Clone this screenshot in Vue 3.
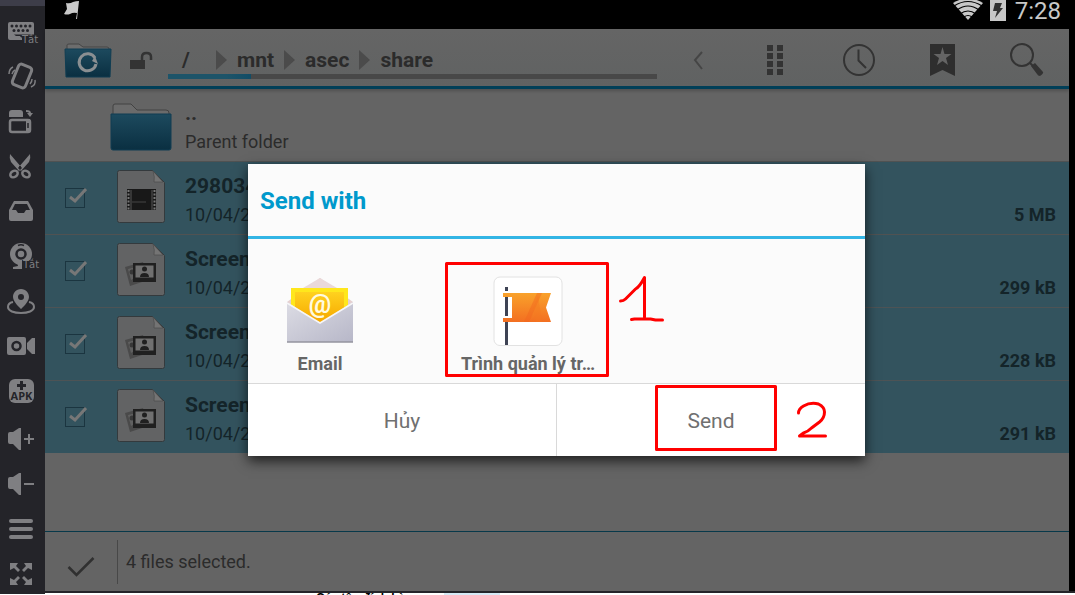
<script setup>
import { ref } from 'vue'

const tools = [
  { label: 'Keyboard off', art: '<rect x="8" y="22" width="26" height="18" rx="2"/><g fill="#242429"><circle cx="12" cy="26" r="1.5"/><circle cx="16.500" cy="26" r="1.500"/><circle cx="21" cy="26" r="1.500"/><circle cx="25.500" cy="26" r="1.500"/><circle cx="30" cy="26" r="1.500"/><circle cx="14" cy="30.500" r="1.500"/><circle cx="18.500" cy="30.500" r="1.500"/><circle cx="23" cy="30.500" r="1.500"/><circle cx="27.500" cy="30.500" r="1.500"/><path d="M14 34.500h20v6H22v-3h-4z"/></g><path d="M29 32h5v2h-5zM14 36h6l2 3h-8z"/><text x="22" y="43" font-size="10" font-family="DejaVu Sans, sans-serif">Tắt</text>' },
  { label: 'Shake', art: '<g fill="none" stroke="#7f7f82"><rect x="15" y="65" width="14" height="22" rx="3" stroke-width="3" transform="rotate(22 22 76)"/><path d="M13 67q-4 2-4 7M15 70q-2 1-3 4M35 80q1 5-4 7M32 79q0 3-2 5" stroke-width="1.5"/></g>' },
  { label: 'Rotate screen', art: '<path d="M12 110h8q3 0 3 3v4H9v-4q0-3 3-3z"/><rect x="10" y="120" width="20" height="12" rx="2" fill="none" stroke="#7f7f82" stroke-width="2.5"/><path d="M26 119h4v13h-4zM26 110q5 0 5 3h2l-3 4-3-4h2q0-1-3-1z"/><path d="M28 123v5" stroke="#242429" stroke-width="1.5"/>' },
  { label: 'Cut', art: '<path d="M10 154l12 14-3 3-8-9q-2-4-1-8zM30 154l-12 14 3 3 8-9q2-4 1-8z"/><g fill="none" stroke="#7f7f82" stroke-width="2.5"><ellipse cx="14" cy="174" rx="4" ry="3" transform="rotate(-35 14 174)"/><ellipse cx="26" cy="174" rx="4" ry="3" transform="rotate(35 26 174)"/></g><circle cx="20" cy="167" r="1" fill="#242429"/>' },
  { label: 'Shared folder', art: '<path d="M14 201h14l5 9v9q0 2-2 2H11q-2 0-2-2v-9z"/><path d="M15 204h12l3 6h-4l-2 3h-6l-2-3h-4z" fill="#242429"/>' },
  { label: 'Webcam off', art: '<circle cx="21" cy="254" r="11"/><path d="M17 262l1 4-5 1v2h13v-7z"/><circle cx="21" cy="254" r="4.500" fill="none" stroke="#242429" stroke-width="2.500"/><path d="M18 245.500q3-1.500 6 0" stroke="#242429" stroke-width="1.500" fill="none"/><path d="M22 260h17v9H22z" fill="#242429"/><text x="23" y="268" font-size="10" font-family="DejaVu Sans, sans-serif">Tắt</text>' },
  { label: 'Location', art: '<path d="M13 302q-5 1-5 5c0 4 6 6 13 6s13-2 13-6q0-4-5-5" fill="none" stroke="#7f7f82" stroke-width="2"/><path fill-rule="evenodd" d="M21 289c-5 0-8 4-8 8 0 5 8 12 8 12s8-7 8-12c0-4-3-8-8-8zm0 5a3 3 0 1 1 0 6 3 3 0 0 1 0-6z"/>' },
  { label: 'Record video', art: '<rect x="7" y="337" width="19" height="18" rx="2"/><circle cx="16.500" cy="346" r="4" fill="none" stroke="#242429" stroke-width="2.500"/><path d="M27 343l5-5h3v16h-3l-5-5z"/>' },
  { label: 'Install APK', art: '<rect x="9" y="379" width="25" height="24" rx="6"/><g fill="#242429"><path d="M20 381h3v3h3v3h-3v3h-3v-3h-3v-3h3z"/><text x="21.500" y="400" text-anchor="middle" font-size="11" font-weight="700" font-family="Open Sans, sans-serif">APK</text></g>' },
  { label: 'Volume up', art: '<path d="M8 434q0-2 2-2h3l6-4h2v22h-2l-6-6h-3q-2 0-2-2zM28 434h2v4h4v2h-4v4h-2v-4h-4v-2h4z"/>' },
  { label: 'Volume down', art: '<path d="M8 479q0-2 2-2h3l6-4h2v22h-2l-6-6h-3q-2 0-2-2zM24 483h10v2H24z"/>' },
  { label: 'Menu', art: '<rect x="9" y="519" width="24" height="4" rx="2"/><rect x="9" y="527" width="24" height="4" rx="2"/><rect x="9" y="535" width="24" height="4" rx="2"/>' },
  { label: 'Full screen', art: '<path d="M10 563h8l-2 3 4 4-2 2-4-4-4 2zM32 563h-8l2 3-4 4 2 2 4-4 4 2zM10 585h8l-2-3 4-4-2-2-4 4-4-2zM32 585h-8l2-3-4-4 2-2 4 4 4-2z"/>' },
]

const files = ref([
  { name: '298034', date: '10/04/20', size: '5 MB', kind: 'video', checked: true },
  { name: 'Screenshot', date: '10/04/20', size: '299 kB', kind: 'image', checked: true },
  { name: 'Screenshot', date: '10/04/20', size: '228 kB', kind: 'image', checked: true },
  { name: 'Screenshot', date: '10/04/20', size: '291 kB', kind: 'image', checked: true },
])

const crumbs = ['mnt', 'asec', 'share']
</script>

<template>
  <div class="shell">
    <aside class="sidebar">
      <button
        v-for="(tool, i) in tools"
        :key="tool.label"
        type="button"
        class="tool"
        :aria-label="tool.label"
      >
        <svg width="45" height="45" :viewBox="`0 ${9 + i * 45} 45 45`" fill="#7f7f82" v-html="tool.art"></svg>
      </button>
    </aside>

    <div class="device">
      <div class="status">
        <svg class="flag" width="18" height="20" viewBox="63 0 18 20">
          <path d="M66 3q4 1 7-1 3-1 6-1l-2 18h-1l1-6q-4-1-7 1-3 1-6 0l3-5z" fill="#c8c8c8" />
        </svg>
        <div class="status-right">
          <svg width="30" height="22" viewBox="953 0 30 22">
            <path d="M968 20l-15-17q15-9 30 0z" fill="#c8c8c8" />
            <path d="M954 6q14-9 28 0M957 10q11-8 22 0M960 14q8-6 16 0M964 17q4-3 8 0" fill="none" stroke="#000" stroke-width="1.2" />
          </svg>
          <svg width="16" height="22" viewBox="990 0 16 22">
            <path d="M990 0h16v21h-16z" fill="#c8c8c8" />
            <path d="M995 3h7l-2 5h3l-8 10 2-7h-4z" fill="#333" />
          </svg>
          <span class="clock">7:28</span>
        </div>
      </div>

      <div class="screen">
        <header class="toolbar">
          <button type="button" class="app" aria-label="Refresh folder">
            <svg width="48" height="38" viewBox="64 42 48 38">
              <defs>
                <linearGradient id="blueFolder" x1="0" y1="0" x2="0" y2="1">
                  <stop offset="0" stop-color="#1d4a5e" />
                  <stop offset="1" stop-color="#0a2f41" />
                </linearGradient>
              </defs>
              <path d="M67 50v-5q0-1 2-1h10l4 3h24q2 0 2 2v3z" fill="#6d6d6d" stroke="#454545" />
              <path d="M65 49h46l-1 28H66z" fill="url(#blueFolder)" stroke="#103d52" />
              <path d="M95 58a8.500 8.500 0 1 0 1 6" fill="none" stroke="#8a8f92" stroke-width="3" />
              <path d="M92 61l3-5 3 8z" fill="#8a8f92" />
            </svg>
          </button>
          <svg class="lock" width="24" height="20" viewBox="129 50 24 20">
            <path d="M130 60h15v9h-15z" fill="#333" />
            <path d="M142 60v-3q0-4 4.500-4t4.500 4v3" fill="none" stroke="#333" stroke-width="2.5" />
          </svg>
          <nav class="path" aria-label="Path">
            <div class="crumbs">
              <a href="#" class="root">/</a>
              <template v-for="c in crumbs" :key="c">
                <svg class="arrow" width="11" height="20" viewBox="0 0 11 20"><path d="M0 0l11 10L0 20z" fill="#4b4b4b" /></svg>
                <a href="#">{{ c }}</a>
              </template>
            </div>
            <div class="progress"><div class="progress-fill"></div></div>
          </nav>
          <div class="actions">
            <button type="button" class="back" aria-label="Back">
              <svg width="12" height="20" viewBox="694 50 12 20"><path d="M703 52l-7 8 7 9" fill="none" stroke="#454545" stroke-width="2" /></svg>
            </button>
            <button type="button" aria-label="View">
              <svg width="18" height="30" viewBox="766 45 18 30"><path d="M767 45h6v6h-6zM777 45h6v6h-6zM767 53h6v6h-6zM777 53h6v6h-6zM767 61h6v6h-6zM777 61h6v6h-6zM767 69h6v6h-6zM777 69h6v6h-6z" fill="#333" /></svg>
            </button>
            <button type="button" aria-label="Recent">
              <svg width="34" height="34" viewBox="842 43 34 34" fill="none" stroke="#333"><circle cx="859" cy="60" r="15" stroke-width="2" /><path d="M858.500 49.500v11l7.500 7.500" stroke-width="2" /></svg>
            </button>
            <button type="button" aria-label="Bookmarks">
              <svg width="26" height="34" viewBox="930 43 26 34"><path d="M930 44h25v32l-12.500-6-12.500 6z" fill="#2e2e2e" /><path d="M942.500 47l2 7h7l-5.500 4 2 7-5.500-4-5.500 4 2-7-5.500-4h7z" fill="#646464" /></svg>
            </button>
            <button type="button" aria-label="Search">
              <svg width="36" height="36" viewBox="1009 42 36 36"><circle cx="1022" cy="55" r="11" fill="none" stroke="#333" stroke-width="2" /><path d="M1030 63l4 4" stroke="#333" stroke-width="2" /><path d="M1031 66l4-3 8 9q1 1-3 4-2 0-3-2z" fill="#333" /></svg>
            </button>
          </div>
        </header>

        <section class="list">
          <div class="row parent">
            <span class="pick"></span>
            <svg class="thumb" width="64" height="52" viewBox="109 101 64 52">
              <path d="M113 115v-10q0-2 2-2h16l6 6h29q3 0 3 3v3z" fill="#6b6b6b" stroke="#424242" />
              <path d="M111 113h60v34q0 2-2 2h-56q-2 0-2-2z" fill="url(#blueFolder)" stroke="#103d52" />
            </svg>
            <div class="info">
              <div class="name">..</div>
              <div class="date">Parent folder</div>
            </div>
          </div>

          <label v-for="(f, i) in files" :key="i" class="row file">
            <span class="pick">
              <input v-model="f.checked" type="checkbox" class="box" />
              <svg v-if="f.checked" class="tick" width="22" height="22" viewBox="0 0 22 22"><path d="M5 9l5 4L21 1" fill="none" stroke="#777" stroke-width="3" /></svg>
            </span>
            <svg class="thumb" width="64" height="54" viewBox="109 170 64 54">
              <path d="M119.500 170.500h33l12 12v38q0 2-2 2h-43q-2 0-2-2v-48q0-2 2-2z" fill="#626364" stroke="#343a3d" />
              <path d="M153 171q2 6 1 11h9z" fill="#747474" stroke="#4b4b4b" stroke-width=".7" />
              <g v-if="f.kind === 'video'">
                <path d="M127 189h29v21h-29z" fill="#181818" />
                <path d="M128.500 190v20M154.500 190v20" stroke="#777" stroke-width="2" stroke-dasharray="2 1.500" />
                <path d="M131 190v20M152 190v20" stroke="#555" />
                <path d="M132 202h14" stroke="#444" />
              </g>
              <g v-else>
                <path d="M125 194l18-5 5 18-18 6z" fill="#4a4a4a" />
                <path d="M128 196l12-3 1 8-10 6z" fill="#606060" />
                <circle cx="132" cy="199" r="2.500" fill="#383838" />
                <path d="M133 190h23v19h-23z" fill="#202020" />
                <path d="M135.500 192.500h18v12h-18z" fill="#707070" />
                <circle cx="144.500" cy="196" r="2.500" fill="#202020" />
                <path d="M140 204q0-4 4.500-4t4.500 4z" fill="#202020" />
              </g>
            </svg>
            <div class="info">
              <div class="name">{{ f.name }}</div>
              <div class="date">{{ f.date }}</div>
            </div>
            <div class="size">{{ f.size }}</div>
          </label>
        </section>

        <footer class="footer">
          <button type="button" class="done" aria-label="Done">
            <svg width="28" height="22" viewBox="67 556 28 22"><path d="M68.500 568l8 8 17-17" fill="none" stroke="#303030" stroke-width="2.500" /></svg>
          </button>
          <p class="summary">4 files selected.</p>
        </footer>

        <div class="overlay">
          <div class="dialog" role="dialog" aria-labelledby="send-title">
            <h2 id="send-title" class="title">Send with</h2>
            <div class="choices">
              <button type="button" class="choice">
                <svg width="70" height="70" viewBox="285 276 70 70">
                  <defs>
                    <linearGradient id="mailBody" x1="0" y1="0" x2="1" y2="1"><stop offset="0" stop-color="#dcdce4" /><stop offset="1" stop-color="#b7b7c8" /></linearGradient>
                    <linearGradient id="mailCard" x1="0" y1="0" x2="0" y2="1"><stop offset="0" stop-color="#ffd21f" /><stop offset="1" stop-color="#f6a800" /></linearGradient>
                    <linearGradient id="pageFlag" x1="0" y1="0" x2="0" y2="1"><stop offset="0" stop-color="#f9a22b" /><stop offset="1" stop-color="#f36f21" /></linearGradient>
                  </defs>
                  <path d="M287 302l33-24 33 24v39h-66z" fill="#e5d0d0" />
                  <path d="M291 288h57v30h-57z" fill="#ffe71c" />
                  <path d="M295 292h49v30h-49z" fill="url(#mailCard)" />
                  <path d="M303 288l17-10 17 10z" fill="#ead9d9" />
                  <text x="320" y="313" text-anchor="middle" font-size="25" font-weight="700" font-family="Roboto, sans-serif" fill="#fffbe0">@</text>
                  <path d="M287 302l33 21 33-21v40h-66z" fill="url(#mailBody)" />
                  <path d="M287 303l33 20 33-20" fill="none" stroke="#f6f6f8" stroke-width="1.500" />
                  <path d="M287 342h66" stroke="#94949f" stroke-width="1.500" />
                </svg>
                <span>Email</span>
              </button>
              <button type="button" class="choice">
                <svg width="70" height="70" viewBox="493 276 70 70">
                  <rect x="494" y="277" width="68" height="68.500" rx="6" fill="#fff" stroke="#e2e2e2" />
                  <path d="M505 287h3v4h-3zM505 297h3v19h-3zM505 322h3v23h-3z" fill="#3e4354" />
                  <path d="M503 293h48l-5 14.500 5 14.500h-48v-4h9v-21h-9z" fill="url(#pageFlag)" />
                  <path d="M524 322l13-29h5l-13 29z" fill="#f2661f" opacity=".45" />
                  <path d="M533 309l5-13 4 26h-6z" fill="#f47721" opacity=".4" />
                </svg>
                <span>Trình quản lý tr…</span>
              </button>
            </div>
            <div class="buttons">
              <button type="button">Hủy</button>
              <button type="button">Send</button>
            </div>
            <svg class="marks" viewBox="248 164 617 292" fill="none" stroke="#f00" stroke-width="3" stroke-linecap="round" stroke-linejoin="round">
              <rect x="446.500" y="263.500" width="161" height="112" />
              <rect x="656.500" y="386.500" width="119" height="63" />
              <path d="M620.500 301q3 0 5-2l10-10q4-2 9-11.500V317M631.500 319.500l3-.5h16l5 1h7" />
              <path d="M798.500 413q0-4 5-7 7-4 15-2 6 3 6 8 0 6-5 10l-8 6q-4 4-8 5l-4 3h26" />
            </svg>
          </div>
        </div>
      </div>
      <div class="frame-edge"></div>
      <div class="page-below"><span class="below-text">Các tệp đính kèm:</span><span class="below-bar"></span></div>
    </div>
  </div>
</template>

<style>
body {
  margin: 0;
  background: #fff;
}
</style>

<style scoped>
.shell {
  display: flex;
  min-height: 100vh;
  font-family: Roboto, "Noto Sans", sans-serif;
  color: #2b2b2b;
}
button {
  padding: 0;
  border: 0;
  background: none;
  color: inherit;
  font: inherit;
  display: flex;
  align-items: center;
  justify-content: center;
}
svg {
  display: block;
  flex: none;
}
a {
  color: inherit;
  text-decoration: none;
}
.sidebar {
  flex: none;
  align-self: flex-start;
  width: 45px;
  padding-top: 3px;
  border-top: 6px solid #3d3d49;
  background: #242429;
}
.tool {
  width: 45px;
  height: 45px;
}
.device {
  flex: 1;
  min-width: 0;
  display: flex;
  flex-direction: column;
}
.status {
  display: flex;
  justify-content: space-between;
  height: 29px;
  padding: 0 14px 0 18px;
  background: #000;
  color: #c8c8c8;
}
.status-right {
  display: flex;
  gap: 7px;
}
.clock {
  margin-left: 2px;
  font-size: 24px;
  line-height: 22px;
}
.screen {
  position: relative;
  flex: 1;
  display: flex;
  flex-direction: column;
  border-right: 6px solid #000;
  background: #646464;
}
.toolbar {
  display: flex;
  align-items: center;
  height: 57px;
  padding-left: 19px;
  border-bottom: 3px solid #003f58;
  background: linear-gradient(#656565, #606262);
  box-shadow: 0 2px 3px rgba(0, 0, 0, 0.2);
}
.app {
  margin-top: 6px;
}
.lock {
  margin: 4px 15px 0 17px;
}
.path {
  flex: 1;
  display: flex;
  flex-direction: column;
  justify-content: flex-end;
  height: 57px;
}
.crumbs {
  display: flex;
  align-items: center;
  height: 28px;
  padding-left: 14px;
  font-size: 21px;
  font-weight: 700;
  line-height: 28px;
}
.root {
  width: 24px;
}
.arrow {
  margin: 0 10px;
}
.progress {
  height: 5px;
  margin-bottom: 7px;
  background: #484848;
}
.progress-fill {
  width: 17%;
  height: 100%;
  background: linear-gradient(90deg, #1d5469 70%, #114c66);
}
.actions {
  display: flex;
  padding: 4px 0 0 8px;
}
.actions button {
  width: 84px;
  height: 57px;
}
.actions .back {
  width: 68px;
}
.row {
  display: flex;
  align-items: center;
  height: 72px;
  padding: 0 13px 0 20px;
  border-bottom: 1px solid #505252;
}
.file {
  background: #33535e;
  color: #142429;
}
.file:last-child {
  border-bottom: 0;
}
.file + .file {
  border-color: #4d5355;
}
.pick {
  position: relative;
  width: 44px;
  height: 20px;
}
.box {
  appearance: none;
  display: block;
  width: 20px;
  height: 20px;
  margin: 0;
  border: 1px solid #1b3540;
}
.tick {
  position: absolute;
  top: 0;
  left: 0;
}
.thumb {
  margin: 0 12px 2px 0;
}
.parent .thumb {
  margin: 5px 12px 0 0;
}
.info {
  flex: 1;
  padding-top: 6px;
}
.name {
  font-size: 21px;
  font-weight: 700;
  line-height: 28px;
}
.date {
  font-size: 18px;
  line-height: 30px;
}
.size {
  align-self: flex-end;
  padding-bottom: 5px;
  font-size: 18px;
  font-weight: 700;
  line-height: 28px;
}
.footer {
  display: flex;
  align-items: center;
  height: 59px;
  margin-top: auto;
  border-top: 1px solid #07394a;
}
.done {
  width: 73px;
  height: 44px;
  padding-top: 8px;
  border-right: 1px solid #484848;
}
.summary {
  margin: 0 0 0 8px;
  font-size: 18px;
  line-height: 24px;
}
.overlay {
  position: absolute;
  inset: 0 1px 0 0;
  display: flex;
  align-items: center;
  justify-content: center;
}
.dialog {
  position: relative;
  width: 100%;
  max-width: 617px;
  background: #fbfbfb;
  box-shadow: 0 5px 12px rgba(0, 0, 0, 0.7);
}
.title {
  margin: 0;
  padding: 2px 12px 0;
  border-bottom: 3px solid #33b5e5;
  color: #0099cc;
  font-size: 24px;
  font-weight: 700;
  line-height: 70px;
}
.choices {
  display: flex;
  gap: 64px;
  height: 107px;
  padding-top: 37px;
}
.choice {
  flex-direction: column;
  justify-content: flex-start;
  width: 144px;
  color: #666;
  font-size: 18px;
  font-weight: 700;
  line-height: 36px;
  white-space: nowrap;
}
.buttons {
  display: flex;
  border-top: 1px solid #d9d9d9;
  background: #fff;
  color: #707070;
  font-size: 21px;
}
.buttons button {
  flex: 1;
  height: 72px;
  padding-top: 2px;
}
.buttons button + button {
  border-left: 1px solid #d9d9d9;
}
.marks {
  position: absolute;
  inset: 0;
  width: 100%;
  height: 100%;
  pointer-events: none;
}
.frame-edge {
  height: 2px;
  background: #242429;
}
.page-below {
  display: flex;
  gap: 25px;
  height: 2px;
  padding-left: 271px;
  overflow: hidden;
  background: #fff;
  color: #000;
  font: 700 12px/10px "Liberation Sans", sans-serif;
}
.below-bar {
  width: 56px;
  height: 2px;
  background: #d6eaf6;
}
</style>
